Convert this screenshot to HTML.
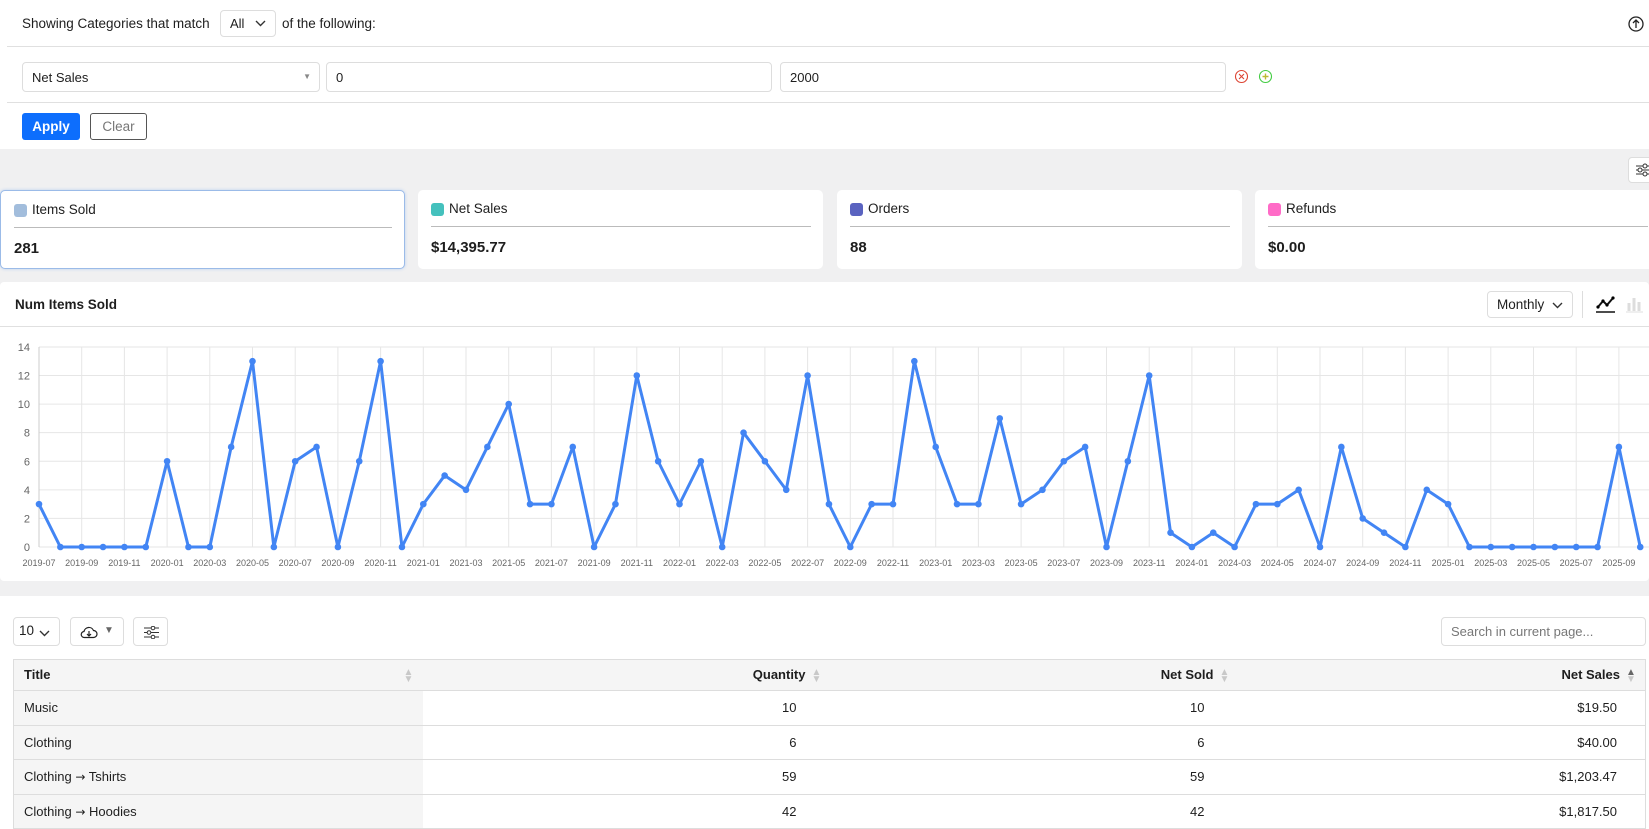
<!DOCTYPE html>
<html><head><meta charset="utf-8"><style>
*{box-sizing:border-box;margin:0;padding:0}
body{width:1649px;height:819px;overflow:hidden;background:#fff;font-family:"Liberation Sans",sans-serif;color:#1e1e1e;font-size:13.5px;position:relative}
.abs{position:absolute}
.gray{position:absolute;left:0;top:149px;width:1649px;height:447px;background:#f0f0f1}
.panel{position:absolute;background:#fff;border-radius:4px}
.inp{position:absolute;border:1px solid #ddd;border-radius:4px;background:#fff;font-size:13px;padding-left:9px;display:flex;align-items:center}
.hl{position:absolute;height:1px;background:#e0e0e0}
.card{position:absolute;top:190px;height:79px;background:#fff;border-radius:5px}
.card .sw{position:absolute;left:13px;top:13px;width:13px;height:13px;border-radius:3px}
.card .lb{position:absolute;left:31px;top:11px;font-size:13.5px}
.card .ln{position:absolute;left:13px;right:12px;top:36px;height:1px;background:#bbb}
.card .v{position:absolute;left:13px;top:49px;font-size:15px;font-weight:bold}
.btn{position:absolute;border:1px solid #ddd;border-radius:4px;background:#fff}
table{position:absolute;left:13px;top:659px;width:1633px;border-collapse:collapse;font-size:13px}
td,th{height:34.5px;border-top:1px solid #ddd;padding:0 10px}
th{background:#f5f5f5;font-weight:bold;height:31px}
td.t{background:#f5f5f5}
.r{text-align:right}
.so{display:inline-block;width:9px;margin-left:6px;vertical-align:middle;color:#c8c8c8;font-size:10px;line-height:7px}
.ar{font-family:"DejaVu Sans",sans-serif;font-size:12px}
</style></head><body>
<div class="gray"></div>
<div class="panel" style="left:0;top:0;width:1649px;height:149px;border-radius:0 0 4px 4px"></div>
<div class="abs" style="left:22px;top:16px">Showing Categories that match</div>
<div class="inp" style="left:220px;top:10px;width:56px;height:27px">All<svg class="abs" style="right:9px;top:9px" width="11" height="7"><path d="M1 1l4.5 4.5L10 1" stroke="#333" stroke-width="1.4" fill="none"/></svg></div>
<div class="abs" style="left:282px;top:16px">of the following:</div>
<svg class="abs" style="left:1627px;top:15px" width="18" height="18"><circle cx="9" cy="9" r="7" stroke="#222" stroke-width="1.3" fill="none"/><path d="M9 13V5M6 8l3-3 3 3" stroke="#222" stroke-width="1.3" fill="none"/></svg>
<div class="hl" style="left:7px;width:1642px;top:46px"></div>
<div class="inp" style="left:22px;top:62px;width:298px;height:30px">Net Sales<span class="abs" style="right:8px;top:9px;font-size:8px;color:#888">▼</span></div>
<div class="inp" style="left:326px;top:62px;width:446px;height:30px">0</div>
<div class="inp" style="left:780px;top:62px;width:446px;height:30px">2000</div>
<svg class="abs" style="left:1234px;top:69px" width="15" height="15"><circle cx="7.5" cy="7.5" r="6" stroke="#d43" stroke-width="1.1" fill="none"/><path d="M5 5l5 5M10 5l-5 5" stroke="#d43" stroke-width="1.1"/></svg>
<svg class="abs" style="left:1258px;top:69px" width="15" height="15"><circle cx="7.5" cy="7.5" r="6" stroke="#4c4" stroke-width="1.1" fill="none"/><path d="M7.5 4.5v6M4.5 7.5h6" stroke="#bb3" stroke-width="1.4"/></svg>
<div class="hl" style="left:7px;width:1642px;top:102px"></div>
<div class="abs" style="left:22px;top:113px;width:58px;height:27px;background:#0d6efd;border-radius:3px;color:#fff;font-weight:bold;display:flex;align-items:center;justify-content:center">Apply</div>
<div class="abs" style="left:90px;top:113px;width:57px;height:27px;border:1px solid #555;border-radius:3px;color:#777;display:flex;align-items:center;justify-content:center">Clear</div>
<div class="btn" style="left:1628px;top:157px;width:30px;height:26px"></div>
<svg class="abs" style="left:1636px;top:163px" width="14" height="14"><path d="M0 3h14M0 7h14M0 11h14" stroke="#333" stroke-width="1.1"/><circle cx="9" cy="3" r="2" fill="#fff" stroke="#333"/><circle cx="4" cy="7" r="2" fill="#fff" stroke="#333"/><circle cx="9" cy="11" r="2" fill="#fff" stroke="#333"/></svg>
<div class="card" style="left:0;width:405px;border:1px solid #9bbbe8;box-shadow:0 0 3px #b8cff0"><div class="sw" style="background:#a2bddc"></div><div class="lb">Items Sold</div><div class="ln"></div><div class="v">281</div></div>
<div class="card" style="left:418px;width:405px"><div class="sw" style="background:#44c1bd"></div><div class="lb">Net Sales</div><div class="ln"></div><div class="v">$14,395.77</div></div>
<div class="card" style="left:837px;width:405px"><div class="sw" style="background:#5a63c0"></div><div class="lb">Orders</div><div class="ln"></div><div class="v">88</div></div>
<div class="card" style="left:1255px;width:405px"><div class="sw" style="background:#ff6bc7"></div><div class="lb">Refunds</div><div class="ln"></div><div class="v">$0.00</div></div>
<div class="panel" style="left:0;top:282px;width:1649px;height:299px"></div>
<div class="abs" style="left:15px;top:297px;font-weight:bold;font-size:13.5px">Num Items Sold</div>
<div class="inp" style="left:1487px;top:291px;width:86px;height:27px;font-size:13.5px">Monthly<svg class="abs" style="right:9px;top:10px" width="11" height="7"><path d="M1 1l4.5 4.5L10 1" stroke="#333" stroke-width="1.4" fill="none"/></svg></div>
<div class="abs" style="left:1582px;top:291px;width:1px;height:27px;background:#ddd"></div>
<svg class="abs" style="left:1595px;top:294px" width="22" height="20"><path d="M3 13l5-6 4 4 6-7" stroke="#111" stroke-width="2" fill="none"/><circle cx="3" cy="13" r="1.6"/><circle cx="8" cy="7" r="1.6"/><circle cx="12" cy="11" r="1.6"/><circle cx="18" cy="4" r="1.6"/><path d="M1 18h19" stroke="#111" stroke-width="1.5"/></svg>
<svg class="abs" style="left:1625px;top:294px" width="20" height="20"><path d="M4 9v8M9 4v13M14 8v9" stroke="#ddd" stroke-width="3"/><path d="M1 18h17" stroke="#e5e5e5" stroke-width="1.2"/></svg>
<div class="hl" style="left:0;width:1649px;top:326px"></div>
<svg id="ch" class="abs" style="left:0;top:326px" width="1649" height="255"></svg>
<div class="panel" style="left:0;top:596px;width:1649px;height:230px"></div>
<div class="btn" style="left:13px;top:617px;width:47px;height:29px;padding:5px 0 0 5px;font-size:13.5px">10<svg class="abs" style="right:9px;top:12px" width="11" height="7"><path d="M1 1l4.5 4.5L10 1" stroke="#333" stroke-width="1.4" fill="none"/></svg></div>
<div class="btn" style="left:70px;top:617px;width:54px;height:29px"><svg class="abs" style="left:9px;top:8px" width="18" height="13"><path d="M4.5 11.5h9a3.5 3.5 0 0 0 0-7 5 5 0 0 0-9.5 1A3 3 0 0 0 4.5 11.5z" stroke="#222" stroke-width="1.2" fill="none"/><path d="M9 5v5M7 8l2 2 2-2" stroke="#222" stroke-width="1.2" fill="none"/></svg><span class="abs" style="left:33px;top:7px;font-size:10px;color:#666">▼</span></div>
<div class="btn" style="left:133px;top:617px;width:35px;height:29px"><svg class="abs" style="left:10px;top:8px" width="15" height="13"><path d="M0 2h15M0 6.5h15M0 11h15" stroke="#333" stroke-width="1.1"/><circle cx="9" cy="2" r="1.8" fill="#fff" stroke="#333"/><circle cx="5" cy="6.5" r="1.8" fill="#fff" stroke="#333"/><circle cx="9" cy="11" r="1.8" fill="#fff" stroke="#333"/></svg></div>
<div class="inp" style="left:1441px;top:617px;width:205px;height:29px;color:#777;font-size:13px">Search in current page...</div>
<table style="border:1px solid #ddd">
<tr><th style="text-align:left;width:409px">Title <span class="so" style="float:right;margin-top:2px">▲<br>▼</span></th><th class="r" style="width:408px">Quantity<span class="so">▲<br>▼</span></th><th class="r" style="width:408px">Net Sold<span class="so">▲<br>▼</span></th><th class="r">Net Sales<span class="so"><span style="color:#666">▲</span><br>▼</span></th></tr>
<tr><td class="t">Music</td><td class="r" style="padding-right:34px">10</td><td class="r" style="padding-right:34px">10</td><td class="r" style="padding-right:28px">$19.50</td></tr>
<tr><td class="t">Clothing</td><td class="r" style="padding-right:34px">6</td><td class="r" style="padding-right:34px">6</td><td class="r" style="padding-right:28px">$40.00</td></tr>
<tr><td class="t">Clothing <span class="ar">→</span> Tshirts</td><td class="r" style="padding-right:34px">59</td><td class="r" style="padding-right:34px">59</td><td class="r" style="padding-right:28px">$1,203.47</td></tr>
<tr><td class="t">Clothing <span class="ar">→</span> Hoodies</td><td class="r" style="padding-right:34px">42</td><td class="r" style="padding-right:34px">42</td><td class="r" style="padding-right:28px">$1,817.50</td></tr>
</table>
<script>
var d=[3,0,0,0,0,0,6,0,0,7,13,0,6,7,0,6,13,0,3,5,4,7,10,3,3,7,0,3,12,6,3,6,0,8,6,4,12,3,0,3,3,13,7,3,3,9,3,4,6,7,0,6,12,1,0,1,0,3,3,4,0,7,2,1,0,4,3,0,0,0,0,0,0,0,7,0];
var x0=39,dx=21.35,y0=221,u=14.29,s='';
for(var k=0;k<=7;k++){var y=y0-k*2*u;s+='<line x1="39" x2="1649" y1="'+y+'" y2="'+y+'" stroke="#e6e6e6"/><text x="30" y="'+(y+4)+'" font-size="11" fill="#666" text-anchor="end" font-family="Liberation Sans">'+(k*2)+'</text>';}
var mo=7,yr=2019;
for(var i=0;i<76;i++){var x=x0+i*dx;if(i%2==0){s+='<line x1="'+x+'" x2="'+x+'" y1="'+(y0-200)+'" y2="'+y0+'" stroke="#e6e6e6"/><text x="'+x+'" y="'+(y0+19)+'" font-size="9" fill="#666" text-anchor="middle" font-family="Liberation Sans">'+yr+'-'+(mo<10?'0':'')+mo+'</text>';}mo++;if(mo>12){mo=1;yr++;}}
s+='<line x1="39" x2="39" y1="'+(y0-200)+'" y2="'+y0+'" stroke="#ccc"/>';
var p='',c='';for(var i=0;i<76;i++){var x=x0+i*dx,y=y0-d[i]*u;p+=x+','+y+' ';c+='<circle cx="'+x+'" cy="'+y+'" r="3.3" fill="#4285f4"/>';}
s+='<polyline points="'+p+'" fill="none" stroke="#4285f4" stroke-width="3" stroke-linejoin="round"/>'+c;
document.getElementById('ch').innerHTML=s;
</script>
</body></html>
